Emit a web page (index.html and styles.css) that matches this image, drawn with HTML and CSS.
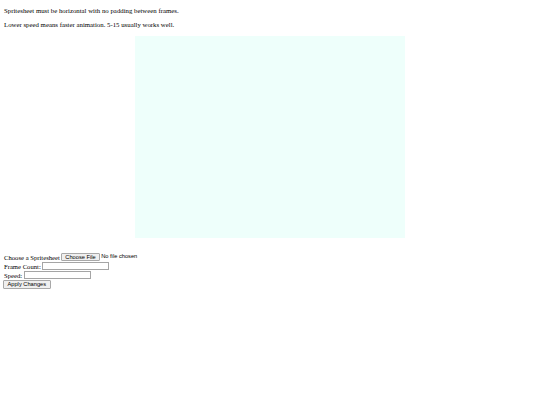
FILE: index.html
```html
<!DOCTYPE html>
<html lang="en">
<head>
<meta charset="utf-8">
<title>Spritesheet Animator</title>
<link rel="stylesheet" href="styles.css">
</head>
<body>
<p class="note">Spritesheet must be horizontal with no padding between frames.</p>
<p class="note">Lower speed means faster animation. 5-15 usually works well.</p>
<div class="stage"><canvas class="sprite-canvas" width="270" height="202"></canvas></div>
<form class="controls">
  <div class="row"><label class="label" for="sheet">Choose a Spritesheet</label><input class="file" id="sheet" type="file"></div>
  <div class="row"><label class="label" for="frames">Frame Count:</label><input class="field" id="frames" type="text"></div>
  <div class="row"><label class="label" for="speed">Speed:</label><input class="field" id="speed" type="text"></div>
  <div class="row"><button class="btn" type="button">Apply Changes</button></div>
</form>
</body>
</html>
```
FILE: styles.css
```css
html, body {
  background: #ffffff;
}
body {
  margin: 0;
  padding: 7.2px 4px 4px;
  font-family: "Liberation Serif", "Times New Roman", serif;
  font-size: 6.67px;
  color: #000;
}
.note {
  margin: 0;
  font-size: 6.8px;
  line-height: 8px;
}
.note + .note {
  margin-top: 6px;
}
.stage {
  margin-top: 6.8px;
  display: flex;
  justify-content: center;
}
.sprite-canvas {
  display: block;
  width: 270px;
  height: 202px;
  background: #eefffb;
}
.controls {
  margin-top: 15px;
  display: flex;
  flex-direction: column;
}
.row {
  height: 9px;
  display: flex;
  align-items: center;
  gap: 1.5px;
}
.label {
  line-height: 7.6px;
}
.field {
  box-sizing: border-box;
  width: 67px;
  height: 8px;
  margin: 0;
  padding: 0 1px;
  border: 1px solid #a5a5a5;
  border-radius: 0;
  font-size: 5.7px;
  background: #fff;
}
.file {
  font-family: "Liberation Sans", Arial, sans-serif;
  font-size: 5.7px;
  margin: 0;
  padding: 0;
  height: 8px;
}
.file::file-selector-button,
.btn {
  box-sizing: border-box;
  height: 7.5px;
  margin: 0 1.5px 0 0;
  padding: 0 3px;
  font-family: "Liberation Sans", Arial, sans-serif;
  font-size: 5.7px;
  line-height: 5px;
  color: #000;
  background: #efefef;
  border: 1px solid #a8a8a8;
  border-radius: 1px;
}
.btn {
  height: 8.5px;
  margin: 0 0 0 -1px;
  padding: 0 3.5px;
}
```
